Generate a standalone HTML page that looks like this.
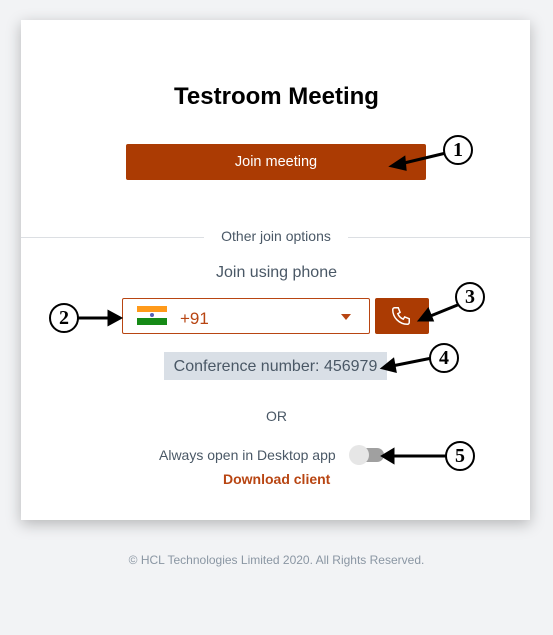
<!DOCTYPE html>
<html><head><style>
body{margin:0;width:553px;height:635px;background:#f2f3f5;font-family:"Liberation Sans",sans-serif;position:relative;overflow:hidden}
.card{position:absolute;left:21px;top:20px;width:509px;height:500px;background:#fff;box-shadow:0 4px 14px rgba(0,0,0,.25)}
.a{position:absolute}
.circ{position:absolute;width:26px;height:26px;border:2.5px solid #000;border-radius:50%;background:#fff;font-family:"Liberation Serif",serif;font-weight:bold;font-size:20px;text-align:center;line-height:26px;color:#000}
</style></head><body>
<div class="card"></div>
<div class="a" style="left:0;width:553px;top:83px;text-align:center;font-size:24px;font-weight:bold;color:#000">Testroom Meeting</div>
<div class="a" style="left:126px;top:144px;width:300px;height:36px;background:#ab3b03;border-radius:2px;color:#fff;font-size:14.5px;text-align:center;line-height:37px">Join meeting</div>
<div class="a" style="left:21px;top:237px;width:509px;height:1px;background:#dcdfe3"></div>
<div class="a" style="left:204px;top:228px;width:144px;background:#fff;text-align:center;font-size:14px;color:#4a5866">Other join options</div>
<div class="a" style="left:0;width:553px;top:264px;text-align:center;font-size:16px;color:#4a5866">Join using phone</div>
<div class="a" style="left:122px;top:298px;width:246px;height:34px;border:1px solid #b84512;border-radius:2px"></div>
<div class="a" style="left:137px;top:306px;width:30px;height:6px;background:#ff9a1a"></div>
<div class="a" style="left:137px;top:312px;width:30px;height:6px;background:#fff"></div>
<div class="a" style="left:150px;top:313px;width:4px;height:4px;border-radius:50%;background:#5560b5"></div>
<div class="a" style="left:137px;top:318px;width:30px;height:7px;background:#158a16"></div>
<div class="a" style="left:180px;top:309px;font-size:17px;color:#b84512">+91</div>
<div class="a" style="left:341px;top:314px;width:0;height:0;border-left:5px solid transparent;border-right:5px solid transparent;border-top:6px solid #b84512"></div>
<div class="a" style="left:375px;top:298px;width:54px;height:36px;background:#ab3b03;border-radius:2px"></div>
<svg class="a" style="left:390px;top:305px" width="22" height="22" viewBox="0 0 24 24" fill="none" stroke="#fff" stroke-width="1.6"><path d="M5 3h4l2 5-2.5 1.5a11 11 0 0 0 6 6L16 13l5 2v4a2 2 0 0 1-2 2A16 16 0 0 1 3 5a2 2 0 0 1 2-2z"/></svg>
<div class="a" style="left:164px;top:352px;width:223px;height:28px;background:#d9dfe6;font-size:16px;color:#4a5866;line-height:30px;text-align:center">Conference number: 456979</div>
<div class="a" style="left:0;width:553px;top:408px;text-align:center;font-size:14px;color:#4a5866">OR</div>
<div class="a" style="left:159px;top:447px;font-size:14px;color:#4a5866">Always open in Desktop app</div>
<div class="a" style="left:352px;top:448px;width:32px;height:14px;border-radius:7px;background:#a0a0a0"></div>
<div class="a" style="left:349px;top:445px;width:20px;height:20px;border-radius:50%;background:#e6e6e6"></div>
<div class="a" style="left:223px;top:471px;font-size:14px;font-weight:bold;color:#b84512">Download client</div>
<div class="a" style="left:0;width:553px;top:553px;text-align:center;font-size:12px;color:#8a96a3">© HCL Technologies Limited 2020. All Rights Reserved.</div>
<svg class="a" style="left:0;top:0" width="553" height="635" stroke="#000" stroke-width="3" fill="#000">
<line x1="446" y1="153" x2="400" y2="164"/><polygon points="392,166 404,158 405,169"/>
<line x1="78" y1="318" x2="112" y2="318"/><polygon points="120,318 109,312 109,324"/>
<line x1="460" y1="304" x2="428" y2="317"/><polygon points="420,320 428,310 432,320"/>
<line x1="432" y1="358" x2="392" y2="366"/><polygon points="383,368 393,360 395,371"/>
<line x1="448" y1="456" x2="392" y2="456"/><polygon points="383,456 393,450 393,462"/>
</svg>
<div class="circ" style="left:443px;top:135px">1</div>
<div class="circ" style="left:49px;top:303px">2</div>
<div class="circ" style="left:455px;top:282px">3</div>
<div class="circ" style="left:429px;top:343px">4</div>
<div class="circ" style="left:445px;top:441px">5</div>
</body></html>
